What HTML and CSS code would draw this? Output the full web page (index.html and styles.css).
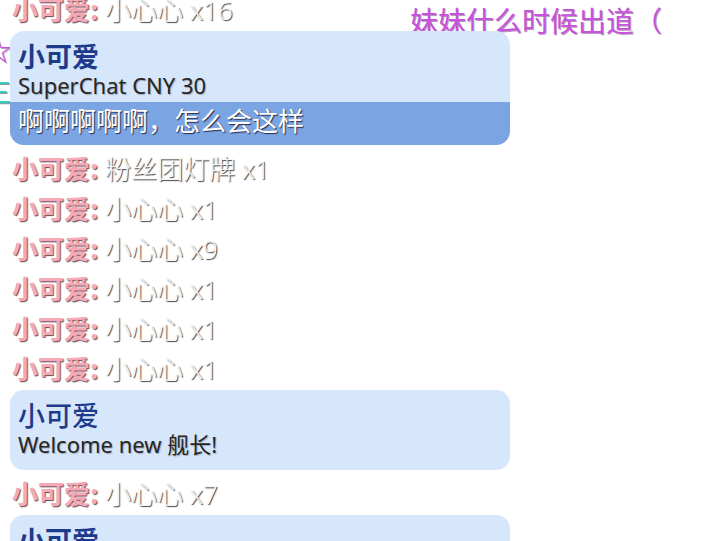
FILE: index.html
```html
<!DOCTYPE html>
<html lang="zh">
<head>
<meta charset="utf-8">
<link rel="stylesheet" href="styles.css">
</head>
<body>
<div class="stage">
  <div class="danmaku dm-purple-top">妹妹什么时候出道（</div>
  <div class="danmaku dm-purple-left">哈哈哈☆</div>
  <div class="danmaku dm-teal-left">来了来了三</div>
  <div class="chat">
    <div class="line"><span class="name">小可爱:</span> <span class="msg">小心心 x16</span></div>
    <div class="card">
      <div class="card-head">
        <div class="card-name">小可爱</div>
        <div class="card-sub">SuperChat CNY 30</div>
      </div>
      <div class="card-band">啊啊啊啊啊，怎么会这样</div>
    </div>
    <div class="line"><span class="name">小可爱:</span> <span class="msg">粉丝团灯牌 x1</span></div>
    <div class="line"><span class="name">小可爱:</span> <span class="msg">小心心 x1</span></div>
    <div class="line"><span class="name">小可爱:</span> <span class="msg">小心心 x9</span></div>
    <div class="line"><span class="name">小可爱:</span> <span class="msg">小心心 x1</span></div>
    <div class="line"><span class="name">小可爱:</span> <span class="msg">小心心 x1</span></div>
    <div class="line"><span class="name">小可爱:</span> <span class="msg">小心心 x1</span></div>
    <div class="card">
      <div class="card-head card-head-only">
        <div class="card-name card-name-light">小可爱</div>
        <div class="card-sub">Welcome new 舰长!</div>
      </div>
    </div>
    <div class="line"><span class="name">小可爱:</span> <span class="msg">小心心 x7</span></div>
    <div class="card">
      <div class="card-head card-head-only">
        <div class="card-name">小可爱</div>
        <div class="card-sub">SuperChat CNY 50</div>
      </div>
    </div>
  </div>
</div>
</body>
</html>
```
FILE: styles.css
```css
html, body {
  margin: 0;
  padding: 0;
  background: #ffffff;
}
body {
  font-family: "Noto Sans", "Noto Sans CJK SC", sans-serif;
}
.stage {
  position: relative;
  width: 716px;
  height: 541px;
  overflow: hidden;
}
.danmaku {
  position: absolute;
  z-index: 0;
  font-family: "Noto Sans CJK SC", sans-serif;
  font-size: 28px;
  line-height: 32px;
  white-space: nowrap;
  text-shadow: 1px 1px 0 rgba(90, 30, 100, 0.45);
}
.dm-purple-top {
  left: 410px;
  top: 4px;
  color: #c752dc;
}
.dm-purple-left {
  right: 704px;
  top: 33px;
  color: #c752dc;
}
.dm-teal-left {
  right: 704px;
  top: 75px;
  color: #38c9c0;
  text-shadow: 1px 1px 0 rgba(20, 60, 60, 0.5);
}
.chat {
  position: relative;
  z-index: 1;
  width: 500px;
  margin: -11px 0 0 10px;
  display: flex;
  flex-direction: column;
}
.line {
  height: 40px;
  line-height: 40px;
  font-size: 26px;
  white-space: nowrap;
  padding-left: 2px;
}
.name {
  font-family: "Noto Sans CJK SC", sans-serif;
  font-weight: 700;
  color: #f4a9b8;
  text-shadow: 1px 1px 1px rgba(70, 40, 50, 0.85);
}
.msg {
  font-weight: 300;
  color: #f7f7f7;
  text-shadow: 1px 1px 1px rgba(40, 40, 40, 0.9);
}
.card {
  margin: 2px 0 3px;
  background: #d6e6fb;
  border-radius: 14px;
  overflow: hidden;
}
.card-head {
  padding: 9px 8px 0;
}
.card-head-only {
  padding-bottom: 13px;
}
.card-name {
  font-family: "Noto Sans CJK SC", sans-serif;
  font-size: 27px;
  line-height: 32px;
  font-weight: 700;
  color: #1e3a8a;
}
.card-name-light {
  font-weight: 500;
}
.card-sub {
  font-size: 22px;
  line-height: 26px;
  color: #262626;
  text-shadow: 1px 1px 1px rgba(0, 0, 0, 0.25);
}
.card-band {
  margin-top: 4px;
  background: #7ba4e3;
  padding: 0 8px;
  height: 43px;
  line-height: 38px;
  font-size: 26px;
  color: #ffffff;
  text-shadow: 1px 1px 1px rgba(30, 30, 60, 0.9);
}
```
